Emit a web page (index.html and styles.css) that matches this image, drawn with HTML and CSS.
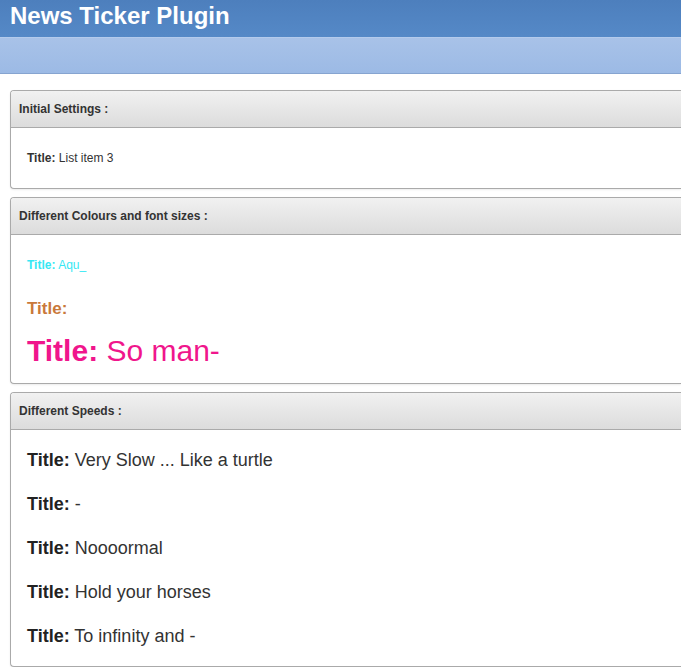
FILE: index.html
```html
<!DOCTYPE html>
<html>
<head>
<meta charset="utf-8">
<title>News Ticker Plugin</title>
<link rel="stylesheet" href="styles.css">
</head>
<body>
<header class="topbar"><h1 class="title">News Ticker Plugin</h1></header>
<div class="subbar"></div>
<main class="content">
  <section class="panel">
    <h3 class="panel-head">Initial Settings :</h3>
    <ul class="panel-body">
      <li class="row small"><b>Title:</b> List item 3</li>
    </ul>
  </section>
  <section class="panel">
    <h3 class="panel-head">Different Colours and font sizes :</h3>
    <ul class="panel-body">
      <li class="row small aqua"><b>Title:</b> Aqu_</li>
      <li class="row medium orange"><b>Title:</b></li>
      <li class="row large pink"><b>Title:</b> So man-</li>
    </ul>
  </section>
  <section class="panel">
    <h3 class="panel-head">Different Speeds :</h3>
    <ul class="panel-body">
      <li class="row speed"><b>Title:</b> Very Slow ... Like a turtle</li>
      <li class="row speed"><b>Title:</b> -</li>
      <li class="row speed"><b>Title:</b> Noooormal</li>
      <li class="row speed"><b>Title:</b> Hold your horses</li>
      <li class="row speed"><b>Title:</b> To infinity and -</li>
    </ul>
  </section>
</main>
</body>
</html>
```

FILE: styles.css
```css
html, body {
  margin: 0;
  padding: 0;
  overflow: hidden;
  background: #fff;
  font-family: "Liberation Sans", Arial, sans-serif;
  color: #333;
}

.topbar {
  height: 37px;
  background: linear-gradient(#4d7fbd, #5589c7);
}

.title {
  margin: 0;
  padding: 0 0 0 10px;
  font-size: 24px;
  font-weight: bold;
  line-height: 31px;
  color: #fff;
}

.subbar {
  height: 35px;
  border-top: 1px solid #b4cbec;
  border-bottom: 1px solid #86a4d0;
  background: linear-gradient(#a8c2e8, #9cbae5);
}

.content {
  display: flex;
  flex-direction: column;
  gap: 8px;
  padding: 16px 0 0 10px;
}

.panel {
  border: 1px solid #aaa;
  border-right: none;
  border-radius: 4px 0 0 4px;
  box-shadow: 0 1px 2px rgba(0, 0, 0, 0.08);
  background: #fff;
}

.panel-head {
  margin: 0;
  height: 36px;
  padding-left: 8px;
  font-size: 12px;
  line-height: 36px;
  font-weight: bold;
  color: #333;
  background: linear-gradient(#f1f1f1, #dcdcdc);
  border-bottom: 1px solid #aaa;
  border-radius: 3px 0 0 0;
}

.panel-body {
  list-style: none;
  margin: 0;
  padding: 8px 0 8px 16px;
}

.row {
  height: 44px;
  line-height: 44px;
  white-space: nowrap;
}

.small { font-size: 12px; }
.medium { font-size: 17px; }
.large { font-size: 30px; line-height: 40px; }
.speed { font-size: 18px; }

.speed b { color: #222; }

.aqua { color: #36e8f4; }
.orange { color: #c9793b; }
.pink { color: #f0168c; }
```
